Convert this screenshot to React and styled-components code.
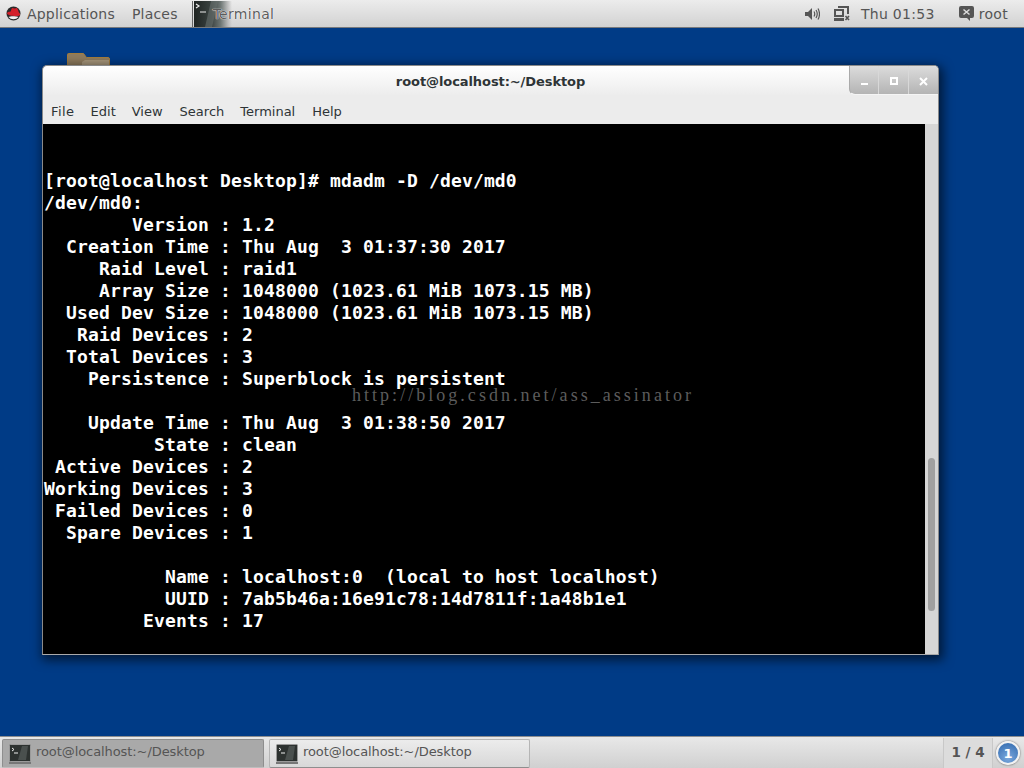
import React from 'react'
import styled, { createGlobalStyle } from 'styled-components'

const GlobalStyle = createGlobalStyle`
  html, body { margin: 0; padding: 0; height: 100%; overflow: hidden; }
  #root { height: 100%; }
`

const Screen = styled.div`
  width: 1024px;
  height: 768px;
  display: flex;
  flex-direction: column;
  overflow: hidden;
  font-family: "DejaVu Sans", sans-serif;
`

const TopBar = styled.div`
  height: 27px;
  flex: none;
  display: flex;
  align-items: center;
  padding: 0 16px 0 6px;
  background: linear-gradient(#ececec, #d2d2d2);
  border-bottom: 1px solid #77797c;
  color: #555;
  font-size: 14px;
  font-weight: 500;
`

const MenuLabel = styled.span`
  margin-left: ${({ $gap }) => $gap}px;
  letter-spacing: 0.2px;
`

const TaskDivider = styled.div`
  width: 1px;
  height: 26px;
  margin-left: 14px;
  background: #666;
`

const AppThumb = styled.div`
  position: relative;
  width: 38px;
  height: 26px;
  margin-left: 1px;
  background: linear-gradient(90deg, #1f2422 0%, #3a4240 45%, #6e7674 70%, rgba(170, 170, 170, 0.6) 90%, rgba(210, 210, 210, 0) 100%);
`

const ThumbLabel = styled.span`
  position: absolute;
  left: 19px;
  top: 5px;
  color: #5c5c5c;
  letter-spacing: 0.3px;
  text-shadow: 0 0 1px #fff, 0 0 1px #fff;
`

const Spacer = styled.div`
  flex: 1;
`

const StatusText = styled.span`
  margin-left: ${({ $gap }) => $gap}px;
  letter-spacing: 0.3px;
`

const StatusIcon = styled.svg`
  flex: none;
  margin-left: ${({ $gap }) => $gap}px;
`

const Desktop = styled.div`
  position: relative;
  flex: 1;
  background: #003b86;
`

const FolderIcon = styled.svg`
  position: absolute;
  left: 67px;
  top: 25px;
`

const Window = styled.div`
  position: absolute;
  left: 42px;
  top: 37px;
  width: 897px;
  height: 590px;
  box-sizing: border-box;
  display: flex;
  flex-direction: column;
  background: #ececec;
  border: 1px solid #8a8a8a;
  border-bottom-color: #aaa;
  border-radius: 5px 5px 0 0;
  box-shadow: 2px 3px 11px 2px rgba(0, 0, 0, 0.6);
`

const TitleBar = styled.div`
  position: relative;
  height: 30px;
  flex: none;
  display: flex;
  align-items: center;
  justify-content: center;
  box-sizing: border-box;
  background: linear-gradient(#fff, #ececec);
  border-radius: 5px 5px 0 0;
  color: #2e3436;
  font-size: 13px;
  font-weight: 700;
  letter-spacing: -0.08px;
`

const WindowButtons = styled.div`
  position: absolute;
  right: 0;
  top: 0;
  height: 28px;
  display: flex;
  background: linear-gradient(#dcdcdc, #b4b4b4);
  border-bottom: 1px solid #f5f5f5;
  border-left: 1px solid #aaa;
  border-radius: 0 4px 0 6px;
`

const WindowButton = styled.div`
  width: ${({ $first }) => ($first ? 28 : 29)}px;
  display: flex;
  align-items: center;
  justify-content: center;
  padding-top: 2px;
  border-left: ${({ $first }) => ($first ? 'none' : '1px solid #d8d8d8')};
`

const MenuBar = styled.div`
  height: 28px;
  flex: none;
  box-sizing: border-box;
  display: flex;
  align-items: center;
  padding: 2px 0 0 8px;
  gap: 16px;
  color: #2e3436;
  font-size: 13px;

  & > span:first-child {
    letter-spacing: 0.45px;
  }
  & > span:nth-child(3) {
    margin-right: 1px;
  }
  & > span:nth-child(5) {
    margin-right: 1px;
  }
`

const TerminalRow = styled.div`
  flex: 1;
  min-height: 0;
  display: flex;
`

const TerminalPane = styled.pre`
  position: relative;
  flex: 1;
  margin: 0;
  padding: 2px 0 0 1px;
  overflow: hidden;
  background: #000;
  color: #fff;
  font-family: "DejaVu Sans Mono", monospace;
  font-size: 18px;
  font-weight: 700;
  letter-spacing: 0.16px;
  line-height: 22px;
`

const Watermark = styled.span`
  position: absolute;
  left: 309px;
  top: 264px;
  color: #5c5c5c;
  font-family: "Liberation Serif", serif;
  font-size: 18px;
  line-height: 14px;
  font-weight: 400;
  letter-spacing: 3.03px;
`

const ScrollTrack = styled.div`
  width: 13px;
  flex: none;
  position: relative;
  background: #d6d6d6;
`

const ScrollThumb = styled.div`
  position: absolute;
  left: 3px;
  top: 334px;
  width: 7px;
  height: 153px;
  border-radius: 4px;
  background: #a0a0a0;
`

const BottomBar = styled.div`
  height: 32px;
  flex: none;
  box-sizing: border-box;
  display: flex;
  align-items: stretch;
  padding: 2px 0 0 2px;
  background: linear-gradient(#e8e8e8, #d0d0d0);
  border-top: 1px solid #8b8d90;
  color: #555;
  font-size: 13px;
  font-weight: 500;
`

const TaskButton = styled.div`
  width: ${({ $active }) => ($active ? 262 : 261)}px;
  margin-right: ${({ $active }) => ($active ? 5 : 0)}px;
  box-sizing: border-box;
  display: flex;
  align-items: center;
  gap: 5px;
  padding-left: 6px;
  letter-spacing: -0.08px;
  background: ${({ $active }) => ($active ? '#a9a9a9' : 'linear-gradient(#ececec, #d8d8d8)')};
  border: 1px solid ${({ $active }) => ($active ? '#8e8e8e' : '#b5b5b5')};
  border-bottom-color: ${({ $active }) => ($active ? '#bdbdbd' : '#8e8e8e')};
  border-radius: 2px;
`

const TaskLabel = styled.span`
  margin-top: -4px;
`

const PagerCell = styled.div`
  width: 50px;
  margin-top: -1px;
  padding-bottom: 3px;
  box-sizing: border-box;
  display: flex;
  align-items: center;
  justify-content: center;
  border-left: 1px solid #c8c8c8;
  border-right: 1px solid #c8c8c8;
  background: #dcdcdc;
  font-weight: 700;
  font-size: 13.5px;
`

const NotifyBadge = styled.div`
  width: 24px;
  height: 24px;
  box-sizing: border-box;
  margin: 2px 4px 0 3px;
  display: flex;
  align-items: center;
  justify-content: center;
  border: 2px solid #f2f2f2;
  border-radius: 50%;
  background: radial-gradient(circle at 50% 75%, #7aa8dd, #2f68ad);
  box-shadow: 0 0 2px #555;
  color: #fff;
  font-size: 13px;
  font-weight: 700;
`

const TERMINAL_TEXT = `

[root@localhost Desktop]# mdadm -D /dev/md0
/dev/md0:
        Version : 1.2
  Creation Time : Thu Aug  3 01:37:30 2017
     Raid Level : raid1
     Array Size : 1048000 (1023.61 MiB 1073.15 MB)
  Used Dev Size : 1048000 (1023.61 MiB 1073.15 MB)
   Raid Devices : 2
  Total Devices : 3
    Persistence : Superblock is persistent

    Update Time : Thu Aug  3 01:38:50 2017
          State : clean
 Active Devices : 2
Working Devices : 3
 Failed Devices : 0
  Spare Devices : 1

           Name : localhost:0  (local to host localhost)
           UUID : 7ab5b46a:16e91c78:14d7811f:1a48b1e1
         Events : 17`

const RedHat = () => (
  <svg width="15" height="15" viewBox="0 0 15 15">
    <circle cx="7.5" cy="7.5" r="7" fill="#2a2a2a" />
    <path d="M2.5 11a6.500 6.500 0 0 0 10 0c-1-1-9-1-10 0z" fill="#f2f2f2" />
    <path d="M1 7.500c1 2.500 10.500 3.500 12.800 1.800.7-.7.200-2-.8-2.500L11.500 2.800c-.4-.8-1-.9-1.800-.6-.8.3-1.500.3-2.300 0-1-.3-1.800 0-2 1L4.700 5.500C3 5.700.8 6.300 1 7.500z" fill="#d3202a" />
  </svg>
)

const TerminalGlyph = () => (
  <svg width="22" height="20" viewBox="0 0 22 20">
    <rect x="0.500" y="0.500" width="21" height="17" rx="1" fill="#2d3230" stroke="#9a9a9a" />
    <path d="M13 2l-4 14h8l2-14z" fill="#4a504e" />
    <path d="M3 4l2 1.500-2 1.500M5 9h4" stroke="#eee" strokeWidth="1" fill="none" />
    <rect x="0" y="18" width="22" height="2" fill="#777" />
  </svg>
)

const App = () => (
  <Screen>
    <GlobalStyle />
    <TopBar>
      <RedHat />
      <MenuLabel $gap={6}>Applications</MenuLabel>
      <MenuLabel $gap={17}>Places</MenuLabel>
      <TaskDivider />
      <AppThumb>
        <svg width="38" height="26" viewBox="0 0 38 26">
          <path d="M17 0l-6 26h7l6-26z" fill="#68706e" fillOpacity="0.6" />
          <path d="M2 3l3 2-3 2M6 11h6" stroke="#eee" strokeWidth="1.200" fill="none" />
        </svg>
        <ThumbLabel>Terminal</ThumbLabel>
      </AppThumb>
      <Spacer />
      <StatusIcon $gap={0} width="15" height="14" viewBox="0 0 15 14">
        <path d="M0 5h3l4-4v12l-4-4H0z" fill="#555" />
        <path d="M9 4.500q1.500 2.500 0 5M11 3q2.500 4 0 8M13 1.500q3 5.500 0 11" stroke="#555" strokeWidth="1.200" fill="none" />
      </StatusIcon>
      <StatusIcon $gap={13} width="17" height="15" viewBox="0 0 17 15">
        <path d="M1 3h10v8H1zM3 5v4h6V5zM1 12h10v3H1z" fill="#555" fillRule="evenodd" />
        <path d="M5 0h11v8h-2V2H5z" fill="#555" />
        <path d="M12.500 10l3.500 4m0-4l-3.500 4" stroke="#555" strokeWidth="1.500" />
      </StatusIcon>
      <StatusText $gap={11}>Thu 01:53</StatusText>
      <StatusIcon $gap={24} width="15" height="15" viewBox="0 0 15 15">
        <path d="M2 0h11a2 2 0 0 1 2 2v8a2 2 0 0 1-2 2h-2v3l-3-3H2a2 2 0 0 1-2-2V2a2 2 0 0 1 2-2z" fill="#555" />
        <path d="M4.500 3.500l6 5m0-5l-6 5" stroke="#ddd" strokeWidth="1.500" />
      </StatusIcon>
      <StatusText $gap={5}>root</StatusText>
    </TopBar>

    <Desktop>
      <FolderIcon width="43" height="14" viewBox="0 0 43 14">
        <path d="M.500 14V1.500q0-1 1-1h15l3 4h21.500q1.500 0 1.500 1.500V14z" fill="#8f7c5e" stroke="#a47d3c" />
        <path d="M15 9l3-2h24v7H15z" fill="#a8977c" />
      </FolderIcon>
      <Window>
        <TitleBar>
          root@localhost:~/Desktop
          <WindowButtons>
            <WindowButton $first>
              <svg width="7" height="8" viewBox="0 0 7 8"><rect y="6" width="7" height="2" fill="#fff" /></svg>
            </WindowButton>
            <WindowButton>
              <svg width="8" height="8" viewBox="0 0 8 8"><path d="M0 0h8v8H0zM2 2v4h4V2z" fill="#fff" fillRule="evenodd" /></svg>
            </WindowButton>
            <WindowButton>
              <svg width="9" height="9" viewBox="0 0 9 9"><path d="M1 1l7 7m0-7L1 8" stroke="#fff" strokeWidth="2" /></svg>
            </WindowButton>
          </WindowButtons>
        </TitleBar>
        <MenuBar>
          <span>File</span>
          <span>Edit</span>
          <span>View</span>
          <span>Search</span>
          <span>Terminal</span>
          <span>Help</span>
        </MenuBar>
        <TerminalRow>
          <TerminalPane>
            {TERMINAL_TEXT}
            <Watermark>http://blog.csdn.net/ass_assinator</Watermark>
          </TerminalPane>
          <ScrollTrack>
            <ScrollThumb />
          </ScrollTrack>
        </TerminalRow>
      </Window>
    </Desktop>

    <BottomBar>
      <TaskButton $active>
        <TerminalGlyph />
        <TaskLabel>root@localhost:~/Desktop</TaskLabel>
      </TaskButton>
      <TaskButton>
        <TerminalGlyph />
        <TaskLabel>root@localhost:~/Desktop</TaskLabel>
      </TaskButton>
      <Spacer />
      <PagerCell>1 / 4</PagerCell>
      <NotifyBadge>1</NotifyBadge>
    </BottomBar>
  </Screen>
)

export default App
